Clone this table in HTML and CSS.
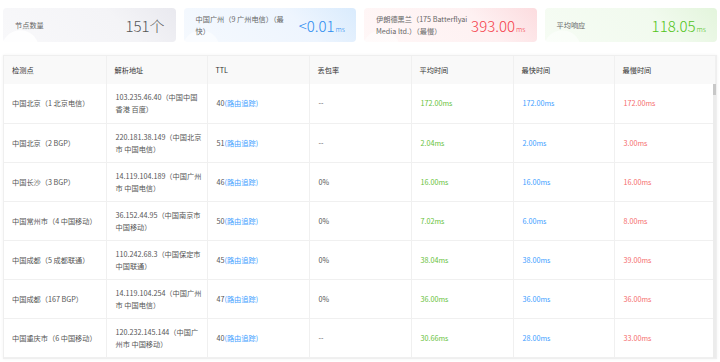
FILE: index.html
```html
<!DOCTYPE html>
<html lang="zh-CN">
<head>
    <meta charset="UTF-8">
    <title>Ping 检测</title>
    <link rel="stylesheet" href="styles.css">
</head>
<body>

    <!-- Summary cards -->
    <div class="summary">
        <div class="card card-gray">
            <div class="card-label">节点数量</div>
            <div class="card-value">151个</div>
        </div>
        <div class="card card-blue">
            <div class="card-label">中国广州（9 广州电信）（最快）</div>
            <div class="card-value blue">&lt;0.01<span class="unit">ms</span></div>
        </div>
        <div class="card card-red">
            <div class="card-label">伊朗德黑兰（175 Batterflyai Media ltd.）（最慢）</div>
            <div class="card-value red">393.00<span class="unit">ms</span></div>
        </div>
        <div class="card card-green">
            <div class="card-label">平均响应</div>
            <div class="card-value green">118.05<span class="unit">ms</span></div>
        </div>
    </div>

    <!-- Result table -->
    <div class="table-wrap">
        <table class="result">
            <colgroup>
                <col class="c1"><col class="c2"><col class="c3"><col class="c4"><col class="c5"><col class="c6"><col class="c7">
            </colgroup>
            <thead>
                <tr>
                    <th>检测点</th>
                    <th>解析地址</th>
                    <th>TTL</th>
                    <th>丢包率</th>
                    <th>平均时间</th>
                    <th>最快时间</th>
                    <th>最慢时间</th>
                </tr>
            </thead>
            <tbody>
                <tr>
                    <td>中国北京（1 北京电信）</td>
                    <td>103.235.46.40（中国中国<br>香港 百度）</td>
                    <td>40<a class="trace">(路由追踪)</a></td>
                    <td>--</td>
                    <td class="green">172.00ms</td>
                    <td class="blue">172.00ms</td>
                    <td class="red">172.00ms</td>
                </tr>
                <tr>
                    <td>中国北京（2 BGP）</td>
                    <td>220.181.38.149（中国北京<br>市 中国电信）</td>
                    <td>51<a class="trace">(路由追踪)</a></td>
                    <td>--</td>
                    <td class="green">2.04ms</td>
                    <td class="blue">2.00ms</td>
                    <td class="red">3.00ms</td>
                </tr>
                <tr>
                    <td>中国长沙（3 BGP）</td>
                    <td>14.119.104.189（中国广州<br>市 中国电信）</td>
                    <td>46<a class="trace">(路由追踪)</a></td>
                    <td>0%</td>
                    <td class="green">16.00ms</td>
                    <td class="blue">16.00ms</td>
                    <td class="red">16.00ms</td>
                </tr>
                <tr>
                    <td>中国常州市（4 中国移动）</td>
                    <td>36.152.44.95（中国南京市<br>中国移动）</td>
                    <td>50<a class="trace">(路由追踪)</a></td>
                    <td>0%</td>
                    <td class="green">7.02ms</td>
                    <td class="blue">6.00ms</td>
                    <td class="red">8.00ms</td>
                </tr>
                <tr>
                    <td>中国成都（5 成都联通）</td>
                    <td>110.242.68.3（中国保定市<br>中国联通）</td>
                    <td>45<a class="trace">(路由追踪)</a></td>
                    <td>0%</td>
                    <td class="green">38.04ms</td>
                    <td class="blue">38.00ms</td>
                    <td class="red">39.00ms</td>
                </tr>
                <tr>
                    <td>中国成都（167 BGP）</td>
                    <td>14.119.104.254（中国广州<br>市 中国电信）</td>
                    <td>47<a class="trace">(路由追踪)</a></td>
                    <td>0%</td>
                    <td class="green">36.00ms</td>
                    <td class="blue">36.00ms</td>
                    <td class="red">36.00ms</td>
                </tr>
                <tr>
                    <td>中国重庆市（6 中国移动）</td>
                    <td>120.232.145.144（中国广<br>州市 中国移动）</td>
                    <td>40<a class="trace">(路由追踪)</a></td>
                    <td>--</td>
                    <td class="green">30.66ms</td>
                    <td class="blue">28.00ms</td>
                    <td class="red">33.00ms</td>
                </tr>
            </tbody>
        </table>

        <!-- Scrollbar overlay -->
        <div class="scrollbar"><div class="thumb"></div></div>
    </div>

</body>
</html>
```

FILE: styles.css
```css
/* Reset */
* {
    margin: 0;
    padding: 0;
    box-sizing: border-box;
}

body {
    font-family: "Noto Sans CJK SC", "Noto Sans", sans-serif;
    background: #fff;
    color: #555;
    width: 720px;
    height: 362px;
    overflow: hidden;
}

/* Summary cards */
.summary {
    display: flex;
    gap: 8px;
    padding: 8px 3px 0 3px;
}

.card {
    flex: 1;
    height: 34px;
    display: flex;
    align-items: center;
    justify-content: space-between;
    padding: 0 11px 0 12px;
    border-radius: 4px;
    overflow: hidden;
}

.card-gray {
    background:
        radial-gradient(circle at 10% 120%, rgba(255, 255, 255, 0.9) 0, rgba(255, 255, 255, 0.9) 18px, rgba(255, 255, 255, 0) 19px),
        linear-gradient(225deg, #e9e9ef 0%, #f4f4f7 35%, #f8f8fa 100%);
}

.card-blue {
    background:
        radial-gradient(circle at 10% 120%, rgba(255, 255, 255, 0.5) 0, rgba(255, 255, 255, 0.5) 18px, rgba(255, 255, 255, 0) 19px),
        linear-gradient(225deg, #d9ebfd 0%, #eef5fe 35%, #f5f9fe 100%);
}

.card-red {
    background:
        radial-gradient(circle at 10% 120%, rgba(255, 255, 255, 0.5) 0, rgba(255, 255, 255, 0.5) 18px, rgba(255, 255, 255, 0) 19px),
        linear-gradient(225deg, #fcdcdf 0%, #fef1f2 35%, #fff7f7 100%);
}

.card-green {
    background:
        radial-gradient(circle at 10% 120%, rgba(255, 255, 255, 0.5) 0, rgba(255, 255, 255, 0.5) 18px, rgba(255, 255, 255, 0) 19px),
        linear-gradient(225deg, #e3f5dc 0%, #f1faee 35%, #f6fcf4 100%);
}

.card-label {
    font-size: 7.2px;
    line-height: 12px;
    color: #666;
    max-width: 94px;
}

.card-value {
    font-size: 15px;
    font-weight: 300;
    color: #555;
    white-space: nowrap;
}

.unit {
    font-size: 7px;
    margin-left: 1px;
}

.blue { color: #409eff; }
.red { color: #f56c6c; }
.green { color: #67c23a; }

.card-value.red { color: #f5404a; }
.card-value.green { color: #52c41a; }
.card-value.blue { color: #2d8cf0; }

/* Result table */
.table-wrap {
    position: relative;
    margin: 13px 3px 0 3px;
    border: 1px solid #efefef;
    box-shadow: 0 0 3px rgba(0, 0, 0, 0.05);
}

.result {
    width: 711px;
    border-collapse: collapse;
    table-layout: fixed;
    font-size: 7.2px;
}

.c1 { width: 102px; }
.c2 { width: 101px; }
.c3 { width: 102px; }
.c4 { width: 102px; }
.c5 { width: 102px; }
.c6 { width: 101px; }
.c7 { width: 101px; }

.result th {
    height: 28px;
    background: #f9f9f9;
    font-weight: normal;
    color: #333;
    text-align: left;
    padding: 0 8px;
    border-right: 1px solid #f0f0f0;
}

.result td {
    height: 39px;
    padding: 0 4px 0 9px;
    line-height: 12px;
    color: #555;
    white-space: nowrap;
    border-right: 1px solid #f0f0f0;
    border-bottom: 1px solid #f0f0f0;
    vertical-align: middle;
}

.result td:first-child {
    padding-left: 8px;
}

.result td.green { color: #67c23a; }
.result td.blue { color: #409eff; }
.result td.red { color: #f56c6c; }

.trace {
    color: #409eff;
    cursor: pointer;
}

/* Scrollbar overlay */
.scrollbar {
    position: absolute;
    top: 28px;
    right: 0;
    bottom: 0;
    width: 3px;
    background: #ececec;
}

.thumb {
    height: 11px;
    background: #c8c8c8;
}
```
